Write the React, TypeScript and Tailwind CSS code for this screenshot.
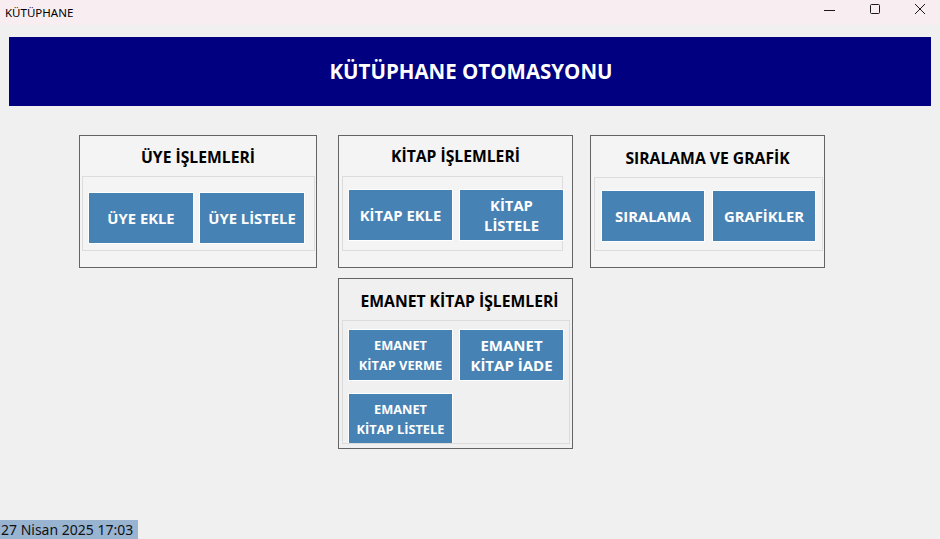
import React from "react";

const font = { fontFamily: '"Open Sans", "Noto Sans", sans-serif' };

function Btn({ label, className }: { label: React.ReactNode; className: string }) {
  return (
    <div
      className={
        "flex shrink-0 items-center justify-center border border-white bg-[#4682b4] text-center font-bold leading-[20px] text-white " +
        className
      }
    >
      {label}
    </div>
  );
}

function WindowControls() {
  return (
    <div className="flex items-center">
      <svg width="46" height="25" viewBox="0 0 46 25">
        <line x1="22" y1="10.5" x2="33" y2="10.5" stroke="#1a1a1a" strokeWidth="1" />
      </svg>
      <svg width="46" height="25" viewBox="0 0 46 25">
        <rect x="22.5" y="4.5" width="9" height="9" rx="1" fill="none" stroke="#1a1a1a" strokeWidth="1" />
      </svg>
      <svg width="46" height="25" viewBox="0 0 46 25">
        <path d="M21 4 L31 14 M31 4 L21 14" stroke="#1a1a1a" strokeWidth="1" />
      </svg>
    </div>
  );
}

export default function App() {
  return (
    <div className="flex h-[539px] w-[940px] flex-col overflow-hidden bg-[#f0f0f0] text-black" style={font}>
      {/* Title bar */}
      <div className="flex h-[25px] shrink-0 items-center justify-between bg-[#f8eef2] pl-[5px]">
        <span className="text-[11.5px]" style={{ fontFamily: '"Noto Sans", sans-serif' }}>
          KÜTÜPHANE
        </span>
        <WindowControls />
      </div>

      {/* Header */}
      <div className="mx-[9px] mt-[12px] flex h-[69px] shrink-0 items-center justify-center bg-[#000080]">
        <span className="pl-[2px] text-[20.5px] font-bold text-white">KÜTÜPHANE OTOMASYONU</span>
      </div>

      {/* Row 1 */}
      <div className="mt-[29px] flex items-start pl-[79px]">
        {/* Üye işlemleri */}
        <div className="h-[133px] w-[238px] shrink-0 border border-[#646464] bg-[#f4f4f4]">
          <div className="flex h-[40px] items-center justify-center pt-[4px] text-[15.7px] font-bold">ÜYE İŞLEMLERİ</div>
          <div className="ml-[2px] flex h-[75px] w-[233px] gap-[5px] border border-[#dcdcdc] pl-[5px] pt-[15px]">
            <Btn label="ÜYE EKLE" className="h-[52px] w-[106px] text-[14.8px]" />
            <Btn label="ÜYE LİSTELE" className="h-[52px] w-[106px] text-[14.8px]" />
          </div>
        </div>

        {/* Kitap işlemleri */}
        <div className="ml-[21px] h-[133px] w-[235px] shrink-0 border border-[#646464] bg-[#f4f4f4]">
          <div className="flex h-[40px] items-center justify-center pt-[2px] text-[15.7px] font-bold">KİTAP İŞLEMLERİ</div>
          <div className="ml-[3px] flex h-[75px] w-[221px] gap-[6px] border border-[#dcdcdc] pl-[5px] pt-[12px]">
            <Btn label="KİTAP EKLE" className="h-[52px] w-[105px] text-[14.8px]" />
            <Btn
              label={
                <>
                  KİTAP
                  <br />
                  LİSTELE
                </>
              }
              className="h-[52px] w-[105px] text-[14.8px]"
            />
          </div>
        </div>

        {/* Sıralama ve grafik */}
        <div className="ml-[17px] h-[133px] w-[235px] shrink-0 border border-[#646464] bg-[#f4f4f4]">
          <div className="flex h-[41px] items-center justify-center pt-[4px] text-[15.7px] font-bold">SIRALAMA VE GRAFİK</div>
          <div className="ml-[3px] flex h-[74px] w-[229px] gap-[7px] border border-[#dcdcdc] pl-[6px] pt-[12px]">
            <Btn label="SIRALAMA" className="h-[52px] w-[104px] text-[14.8px]" />
            <Btn label="GRAFİKLER" className="h-[52px] w-[104px] text-[14.8px]" />
          </div>
        </div>
      </div>

      {/* Row 2 */}
      <div className="mt-[10px] flex pl-[338px]">
        <div className="h-[171px] w-[235px] shrink-0 border border-[#646464] bg-[#f0f0f0]">
          <div className="flex h-[41px] items-center justify-center pl-[8px] pt-[4px] text-[15.7px] font-bold">
            EMANET KİTAP İŞLEMLERİ
          </div>
          <div className="ml-[3px] grid h-[124px] w-[228px] grid-cols-[105px_105px] content-start gap-x-[6px] gap-y-[12px] overflow-hidden border border-[#dcdcdc] pl-[5px] pt-[8px]">
            <Btn
              label={
                <>
                  EMANET
                  <br />
                  KİTAP VERME
                </>
              }
              className="h-[52px] text-[12.8px] leading-[17px]"
            />
            <Btn
              label={
                <>
                  EMANET
                  <br />
                  KİTAP İADE
                </>
              }
              className="h-[52px] text-[15px]"
            />
            <Btn
              label={
                <>
                  EMANET
                  <br />
                  KİTAP LİSTELE
                </>
              }
              className="h-[52px] text-[12.8px] leading-[17px]"
            />
          </div>
        </div>
      </div>

      {/* Status */}
      <div className="mt-auto flex">
        <div className="h-[19px] bg-[#99b4d1] pl-[1px] pr-[5px] text-[14px] leading-[19px] text-[#111]" style={{ fontFamily: '"Noto Sans", sans-serif' }}>
          27 Nisan 2025 17:03
        </div>
      </div>
    </div>
  );
}
